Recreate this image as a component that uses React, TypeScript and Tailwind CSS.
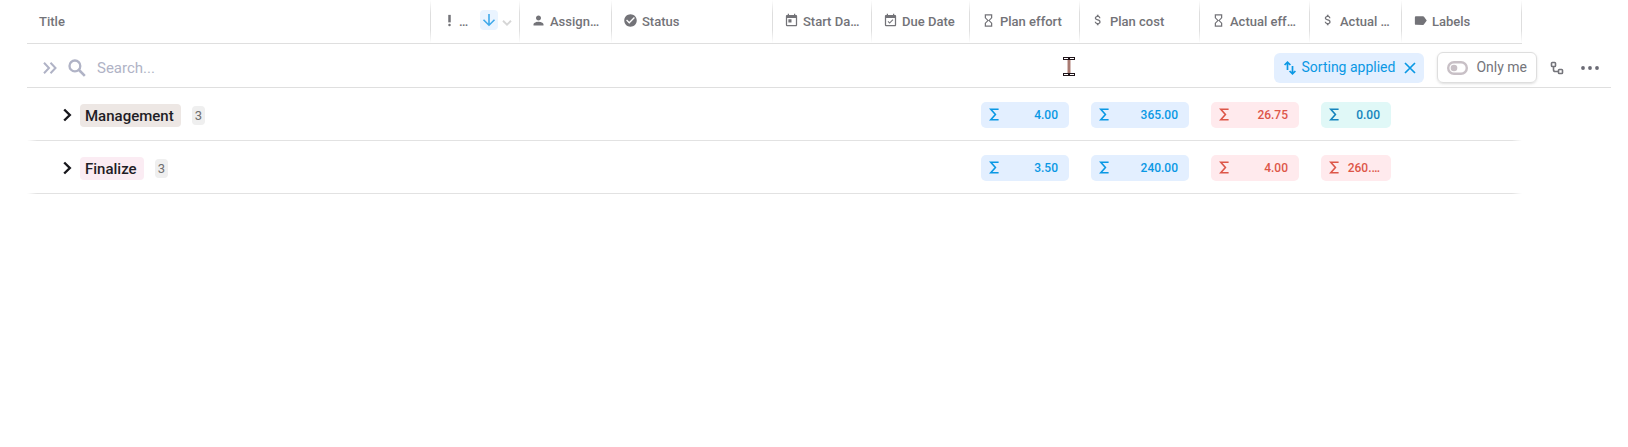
import type { ReactNode } from 'react';
import clsx from 'clsx';
import {
  MdAttachMoney,
  MdCheckCircle,
  MdEventAvailable,
  MdHourglassEmpty,
  MdLabel,
  MdPerson,
  MdPriorityHigh,
  MdToday,
} from 'react-icons/md';

interface Column {
  id: string;
  label: string;
  icon?: ReactNode;
  width: string;
  sorted?: boolean;
}

type Tone = 'blue' | 'red' | 'teal';

interface Total {
  value: string;
  tone: Tone;
}

interface Group {
  name: string;
  count: number;
  tagClass: string;
  totals: Record<string, Total>;
}

const COLUMNS: Column[] = [
  { id: 'title', label: 'Title', width: 'w-auto' },
  {
    id: 'priority',
    label: '…',
    icon: <MdPriorityHigh size={15} />,
    width: 'w-[89px]',
    sorted: true,
  },
  {
    id: 'assignee',
    label: 'Assign…',
    icon: <MdPerson size={15} />,
    width: 'w-[92px]',
  },
  {
    id: 'status',
    label: 'Status',
    icon: <MdCheckCircle size={15} />,
    width: 'w-[161px]',
  },
  {
    id: 'start',
    label: 'Start Da…',
    icon: <MdToday size={15} />,
    width: 'w-[99px]',
  },
  {
    id: 'due',
    label: 'Due Date',
    icon: <MdEventAvailable size={15} />,
    width: 'w-[98px]',
  },
  {
    id: 'planEffort',
    label: 'Plan effort',
    icon: <MdHourglassEmpty size={15} />,
    width: 'w-[110px]',
  },
  {
    id: 'planCost',
    label: 'Plan cost',
    icon: <MdAttachMoney size={14} />,
    width: 'w-[120px]',
  },
  {
    id: 'actualEffort',
    label: 'Actual eff…',
    icon: <MdHourglassEmpty size={15} />,
    width: 'w-[110px]',
  },
  {
    id: 'actualCost',
    label: 'Actual …',
    icon: <MdAttachMoney size={14} />,
    width: 'w-[92px]',
  },
  {
    id: 'labels',
    label: 'Labels',
    icon: <MdLabel size={15} />,
    width: 'w-[120px]',
  },
];

const GROUPS: Group[] = [
  {
    name: 'Management',
    count: 3,
    tagClass: 'bg-[#ede7e4]',
    totals: {
      planEffort: { value: '4.00', tone: 'blue' },
      planCost: { value: '365.00', tone: 'blue' },
      actualEffort: { value: '26.75', tone: 'red' },
      actualCost: { value: '0.00', tone: 'teal' },
    },
  },
  {
    name: 'Finalize',
    count: 3,
    tagClass: 'bg-[#fbecf3]',
    totals: {
      planEffort: { value: '3.50', tone: 'blue' },
      planCost: { value: '240.00', tone: 'blue' },
      actualEffort: { value: '4.00', tone: 'red' },
      actualCost: { value: '260.…', tone: 'red' },
    },
  },
];

const TONES: Record<Tone, string> = {
  blue: 'bg-[#e3efff] text-[#0a98e4]',
  red: 'bg-[#ffeaed] text-[#dd5648]',
  teal: 'bg-[#e0f8f7] text-[#1584bd]',
};

function HeaderCell({ column }: { column: Column }) {
  return (
    <th
      scope="col"
      className={clsx(
        'h-11 border-b border-[#dfdfdf] p-0 font-medium',
        // column divider, faded at both ends
        'bg-[linear-gradient(to_bottom,transparent,#dedede_30%,#dedede_70%,transparent)] bg-[length:1px_100%] bg-right bg-no-repeat',
      )}
    >
      <div
        className={clsx(
          'flex items-center',
          column.icon ? 'pl-[10px]' : 'pl-3',
          column.sorted ? 'gap-0.5' : 'gap-1',
        )}
      >
        {column.icon && (
          <span className="flex w-4 shrink-0 justify-center pb-[3px]">
            {column.icon}
          </span>
        )}
        <span className="whitespace-nowrap">{column.label}</span>
        {column.sorted && (
          <span className="ml-auto flex items-center gap-1 pr-2 pb-1">
            <button
              type="button"
              aria-label="Sorted descending"
              className="flex h-5 w-[18px] items-center justify-center rounded bg-[#eaf4ff] text-[#3fa9ea]"
            >
              <svg
                width="14"
                height="14"
                viewBox="0 0 14 14"
                fill="none"
                stroke="currentColor"
                strokeWidth="1.6"
              >
                <path d="M7 1v11M1.5 6.8L7 12.2l5.5-5.4" />
              </svg>
            </button>
            <button
              type="button"
              aria-label="Column menu"
              className="flex h-5 items-end pb-1 text-[#d6d6d6]"
            >
              <svg
                width="10"
                height="6"
                viewBox="0 0 10 6"
                fill="none"
                stroke="currentColor"
                strokeWidth="1.9"
              >
                <path d="M1 .8l4 3.8L9 .8" />
              </svg>
            </button>
          </span>
        )}
      </div>
    </th>
  );
}

function Toolbar() {
  return (
    <div className="flex h-[43px] items-center pt-1 pr-3 pl-4">
      <button type="button" aria-label="Expand all" className="text-[#b0b3c6]">
        <svg
          width="14"
          height="12"
          viewBox="0 0 14 12"
          fill="none"
          stroke="currentColor"
          strokeWidth="2"
        >
          <path d="M1 .8L6 6l-5 5.2M7.5.8l5 5.2-5 5.2" />
        </svg>
      </button>
      <label htmlFor="search" className="ml-[11px] text-[#b0b3c6]">
        <svg
          width="18"
          height="18"
          viewBox="0 0 18 18"
          fill="none"
          stroke="currentColor"
          aria-label="Search"
        >
          <circle cx="6.9" cy="6.9" r="5.4" strokeWidth="2.3" />
          <path d="M11 11l5.8 5.8" strokeWidth="2.6" />
        </svg>
      </label>
      <div className="relative ml-[11px] flex-1">
        <input
          id="search"
          type="text"
          placeholder="Search..."
          className="w-full text-[15px] outline-none placeholder:text-[#b0b3c6]"
        />
        {/* text pointer hovering the search box */}
        <svg
          className="pointer-events-none absolute top-[1px] right-[199px]"
          width="12"
          height="19"
          viewBox="0 0 12 19"
          shapeRendering="crispEdges"
          aria-hidden="true"
        >
          <path d="M4 1h4v17H4z" fill="#d8c0bc" />
          <path d="M5 2h2v15H5z" fill="#a87a72" />
          <path d="M0 0h12v3H0zM0 16h12v3H0z" fill="#20151a" />
          <path d="M1 1h4v1H1zM7 1h4v1H7zM1 17h4v1H1zM7 17h4v1H7z" fill="#fff" />
        </svg>
      </div>
      <div className="flex h-[30px] items-center rounded-md bg-[#e3efff] px-2 text-[14px] text-[#0a98e4]">
        <button type="button" className="flex items-center gap-1">
          <svg
            width="16"
            height="16"
            viewBox="0 0 16 16"
            fill="none"
            stroke="currentColor"
            strokeWidth="1.7"
            aria-hidden="true"
          >
            <path d="M5.5 10V2.2M2.6 5l2.9-2.9L8.4 5" />
            <path d="M10.5 6v7.8M7.6 11l2.9 2.9 2.9-2.9" />
          </svg>
          <span className="whitespace-nowrap">Sorting applied</span>
        </button>
        <button type="button" aria-label="Clear sorting" className="ml-[9px]">
          <svg
            width="12"
            height="12"
            viewBox="0 0 12 12"
            fill="none"
            stroke="currentColor"
            strokeWidth="1.7"
          >
            <path d="M1 1l10 10M11 1L1 11" />
          </svg>
        </button>
      </div>
      <button
        type="button"
        role="switch"
        aria-checked="false"
        className="ml-[13px] flex h-[31px] items-center gap-2 rounded-md border border-[#dedede] px-[9px] text-[14px] whitespace-nowrap text-[#75757b] shadow-sm"
      >
        <svg width="21" height="14" viewBox="0 0 21 14" fill="none">
          <rect
            x="1.2"
            y="1.2"
            width="18.6"
            height="11.6"
            rx="5.8"
            stroke="#c8c0c6"
            strokeWidth="2.4"
          />
          <circle cx="7" cy="7" r="3.3" fill="#c8c0c6" />
        </svg>
        Only me
      </button>
      <button
        type="button"
        aria-label="Hierarchy"
        className="ml-[13px] text-[#75757b]"
      >
        <svg
          width="14"
          height="14"
          viewBox="0 0 14 14"
          fill="none"
          stroke="currentColor"
          strokeWidth="1.6"
        >
          <rect x="1.5" y="1.5" width="4" height="4" rx=".8" />
          <rect x="8.5" y="8.5" width="4" height="4" rx=".8" />
          <path d="M3.5 5.5v3.2q0 1.8 1.8 1.8h3.2" />
        </svg>
      </button>
      <button
        type="button"
        aria-label="More"
        className="ml-[17px] text-[#6b6b75]"
      >
        <svg width="18" height="4" viewBox="0 0 18 4" fill="currentColor">
          <circle cx="2" cy="2" r="1.9" />
          <circle cx="9" cy="2" r="1.9" />
          <circle cx="16" cy="2" r="1.9" />
        </svg>
      </button>
    </div>
  );
}

function TotalChip({ total }: { total: Total }) {
  return (
    <div
      className={clsx(
        'mx-[11px] flex h-[26px] items-center justify-between rounded-[5px] pr-[11px] pl-2 text-[12px] font-medium',
        TONES[total.tone],
      )}
    >
      <svg
        width="10"
        height="13"
        viewBox="0 0 10 13"
        fill="none"
        stroke="currentColor"
        strokeWidth="1.6"
        aria-label="Sum"
      >
        <path d="M9.6 1.3H1.8L6.4 6.5 1.8 11.7h7.8" />
      </svg>
      {total.value}
    </div>
  );
}

function GroupRow({ group }: { group: Group }) {
  return (
    <tr>
      {COLUMNS.map((column) => {
        if (column.id === 'title') {
          return (
            <th
              key={column.id}
              scope="row"
              className="h-[53px] bg-[linear-gradient(to_right,transparent,#e2e2e2_10px)] bg-[length:100%_1px] bg-bottom bg-no-repeat p-0 font-normal"
            >
              <div className="flex items-center pl-9">
                <button
                  type="button"
                  aria-label={`Expand ${group.name}`}
                  className="text-[#17171c]"
                >
                  <svg
                    width="9"
                    height="14"
                    viewBox="0 0 9 14"
                    fill="none"
                    stroke="currentColor"
                    strokeWidth="2.4"
                  >
                    <path d="M1.2 1.5L6.8 7l-5.6 5.5" />
                  </svg>
                </button>
                <span
                  className={clsx(
                    'mt-0.5 ml-2 rounded pt-px pr-[7px] pl-[5px] text-[15px] leading-[22px] font-medium text-[#1f1d26]',
                    group.tagClass,
                  )}
                >
                  {group.name}
                </span>
                <span className="mt-0.5 ml-[11px] rounded bg-[#efefef] px-[3px] text-[13px] leading-[19px] text-[#6f6f6f]">
                  {group.count}
                </span>
              </div>
            </th>
          );
        }
        const total = group.totals[column.id];
        return (
          <td
            key={column.id}
            className={clsx(
              'bg-[length:100%_1px] bg-bottom bg-no-repeat p-0',
              column.id === 'labels'
                ? 'bg-[linear-gradient(to_left,transparent,#e2e2e2_10px)]'
                : 'bg-[linear-gradient(#e2e2e2,#e2e2e2)]',
            )}
          >
            {total && <TotalChip total={total} />}
          </td>
        );
      })}
      <td />
    </tr>
  );
}

export default function App() {
  return (
    <main className="min-h-screen bg-white pr-[17px] pl-[27px] font-['Roboto',sans-serif]">
      <table className="w-full table-fixed border-separate border-spacing-0 text-left">
        <colgroup>
          {COLUMNS.map((column) => (
            <col key={column.id} className={column.width} />
          ))}
          <col className="w-[89px]" />
        </colgroup>
        <thead className="text-[13px] text-[#737378]">
          <tr>
            {COLUMNS.map((column) => (
              <HeaderCell key={column.id} column={column} />
            ))}
            <td />
          </tr>
        </thead>
        <tbody>
          <tr>
            <td
              colSpan={COLUMNS.length + 1}
              className="border-b border-[#dfdfdf] p-0"
            >
              <Toolbar />
            </td>
          </tr>
          {GROUPS.map((group) => (
            <GroupRow key={group.name} group={group} />
          ))}
        </tbody>
      </table>
    </main>
  );
}
